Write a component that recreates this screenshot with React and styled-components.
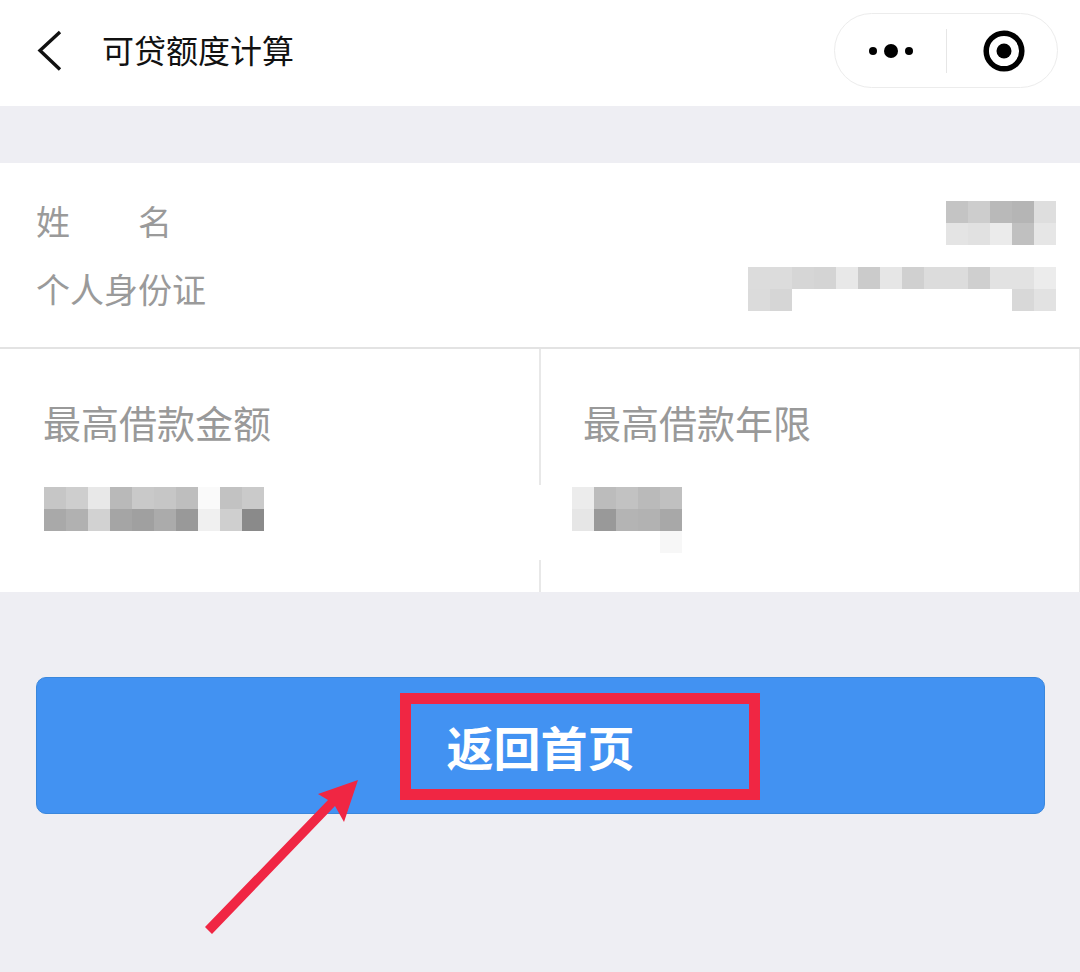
import React from "react";
import styled, { createGlobalStyle } from "styled-components";

const GlobalStyle = createGlobalStyle`
  html, body {
    margin: 0;
    padding: 0;
    background: #eeeef3;
  }
  body {
    font-family: "Noto Sans CJK SC", "Liberation Sans", sans-serif;
  }
`;

const Page = styled.div`
  position: relative;
  width: 1080px;
  height: 972px;
  overflow: hidden;
  background: #eeeef3;
`;

const Header = styled.header`
  display: flex;
  align-items: center;
  height: 106px;
  padding: 0 22px 5px 36px;
  box-sizing: border-box;
  background: #fff;
`;

const Title = styled.h1`
  flex: 1;
  margin: 0 0 3px 40px;
  font-size: 32px;
  font-weight: 400;
  line-height: 44px;
  color: #111;
`;

const Capsule = styled.div`
  display: flex;
  align-items: center;
  flex: none;
  width: 224px;
  height: 75px;
  box-sizing: border-box;
  border: 1px solid #ececec;
  border-radius: 38px;
  background: #fff;
`;

const CapsuleSlot = styled.div`
  display: flex;
  align-items: center;
  justify-content: center;
  flex: none;
  box-sizing: border-box;
  width: ${(p) => p.$width}px;
  height: 100%;
  padding-left: ${(p) => p.$nudge || 0}px;
`;

const CapsuleLine = styled.div`
  flex: none;
  width: 1px;
  height: 44px;
  background: #e6e6e6;
`;

const Card = styled.section`
  margin-top: 57px;
  background: #fff;
`;

const Info = styled.div`
  padding: 26px 24px 22px 36px;
`;

const InfoRow = styled.div`
  display: flex;
  align-items: center;
  justify-content: space-between;
  height: 68px;
`;

const InfoLabel = styled.span`
  margin-bottom: 4px;
  font-size: 34px;
  line-height: 44px;
  color: #9a9a9a;
  white-space: pre;
`;

const Stats = styled.div`
  display: grid;
  grid-template-columns: 540px 1fr;
  height: 245px;
  border-top: 2px solid #e3e3e3;
  box-sizing: border-box;
`;

const Stat = styled.div`
  box-sizing: border-box;
  padding: 48px 0 0 ${(p) => (p.$right ? "44px" : "43px")};
  ${(p) =>
    p.$right &&
    `
    margin-left: -1px;
    border-right: 1px solid #e8e8e8;
    background: linear-gradient(#e8e8e8 0, #e8e8e8 136px, #fff 136px, #fff 211px, #e8e8e8 211px) left top / 2px 100% no-repeat;
  `}
`;

const StatLabel = styled.div`
  font-size: 38px;
  line-height: 50px;
  color: #999;
`;

const StatValue = styled.div`
  margin-top: 40px;
  margin-left: ${(p) => p.$shift || 0}px;
`;

const Mosaic = styled.div`
  display: grid;
  grid-template-columns: repeat(${(p) => p.$cols}, 22px);
  grid-auto-rows: 22px;
  width: max-content;
  margin-bottom: ${(p) => p.$lift || 0}px;
`;

const Cell = styled.div`
  background: ${(p) => p.$tone};
`;

const BackButton = styled.button`
  display: flex;
  align-items: center;
  justify-content: center;
  position: relative;
  width: 1009px;
  height: 137px;
  margin: 85px 0 0 36px;
  padding: 0;
  border: 1px solid #3a87dc;
  border-radius: 10px;
  background: #4292f2;
  font-family: inherit;
  font-size: 47px;
  font-weight: 700;
  line-height: 60px;
  color: #fff;
`;

/* red annotation drawn over the button */
const Highlight = styled.div`
  position: absolute;
  left: 363px;
  top: 15px;
  width: 360px;
  height: 107px;
  box-sizing: border-box;
  border: 11px solid #f02643;
`;

const Arrow = styled.svg`
  position: absolute;
  left: 200px;
  top: 775px;
`;

const nameTones = [
  "#c4c4c4", "#cdcdcd", "#b9b9b9", "#b5b5b5", "#dedede",
  "#e4e4e4", "#e1e1e1", "#ebebeb", "#c0c0c0", "#e6e6e6",
];

const idTones = [
  "#dcdcdc", "#dcdcdc", "#d6d6d6", "#d4d4d4", "#e8e8e8", "#cbcbcb", "#e6e6e6",
  "#d0d0d0", "#dcdcdc", "#dcdcdc", "#cfcfcf", "#e2e2e2", "#e2e2e2", "#ececec",
  "#dbdbdb", "#d6d6d6", "#fff", "#fff", "#fff", "#fff", "#fff",
  "#fff", "#fff", "#fff", "#fff", "#fff", "#d8d8d8", "#e2e2e2",
];

const amountTones = [
  "#c6c6c6", "#cecece", "#e8e8e8", "#b9b9b9", "#c9c9c9", "#c6c6c6", "#bebebe", "#fafafa", "#c2c2c2", "#cacaca",
  "#a9a9a9", "#b1b1b1", "#d2d2d2", "#a5a5a5", "#a0a0a0", "#ababab", "#999999", "#f0f0f0", "#cfcfcf", "#8a8a8a",
];

const yearTones = [
  "#ececec", "#bcbcbc", "#c2c2c2", "#bababa", "#c0c0c0",
  "#e6e6e6", "#999999", "#b4b4b4", "#b2b2b2", "#a8a8a8",
  "#fff", "#fff", "#fff", "#fff", "#f7f7f7",
];

const Pixels = ({ cols, tones, lift }) => (
  <Mosaic $cols={cols} $lift={lift}>
    {tones.map((tone, i) => (
      <Cell key={i} $tone={tone} />
    ))}
  </Mosaic>
);

export default function App() {
  return (
    <Page>
      <GlobalStyle />
      <Header>
        <svg width="26" height="42" viewBox="0 0 26 42">
          <path d="M24 2 L4 20.5 L24 39.5" fill="none" stroke="#111" strokeWidth="3.4" />
        </svg>
        <Title>可贷额度计算</Title>
        <Capsule>
          <CapsuleSlot $width={111}>
            <svg width="50" height="16" viewBox="0 0 50 16">
              <circle cx="7" cy="8" r="4" fill="#000" />
              <circle cx="25" cy="8" r="7" fill="#000" />
              <circle cx="43" cy="8" r="4" fill="#000" />
            </svg>
          </CapsuleSlot>
          <CapsuleLine />
          <CapsuleSlot $width={110} $nudge={4}>
            <svg width="42" height="42" viewBox="0 0 42 42">
              <circle cx="21" cy="21" r="17.8" fill="none" stroke="#000" strokeWidth="5.5" />
              <circle cx="21" cy="21" r="7.5" fill="#000" />
            </svg>
          </CapsuleSlot>
        </Capsule>
      </Header>

      <Card>
        <Info>
          <InfoRow>
            <InfoLabel>姓　　名</InfoLabel>
            <Pixels cols={5} tones={nameTones} />
          </InfoRow>
          <InfoRow>
            <InfoLabel>个人身份证</InfoLabel>
            <Pixels cols={14} tones={idTones} lift={4} />
          </InfoRow>
        </Info>
        <Stats>
          <Stat>
            <StatLabel>最高借款金额</StatLabel>
            <StatValue $shift={1}>
              <Pixels cols={10} tones={amountTones} />
            </StatValue>
          </Stat>
          <Stat $right>
            <StatLabel>最高借款年限</StatLabel>
            <StatValue $shift={-11}>
              <Pixels cols={5} tones={yearTones} />
            </StatValue>
          </Stat>
        </Stats>
      </Card>

      <BackButton>
        返回首页
        <Highlight />
      </BackButton>

      <Arrow width="165" height="165" viewBox="200 775 165 165">
        <path d="M205 927 L212 934 L335 806 L344 822 L358 780 L318 794 L328 800 Z" fill="#f02643" />
      </Arrow>
    </Page>
  );
}
